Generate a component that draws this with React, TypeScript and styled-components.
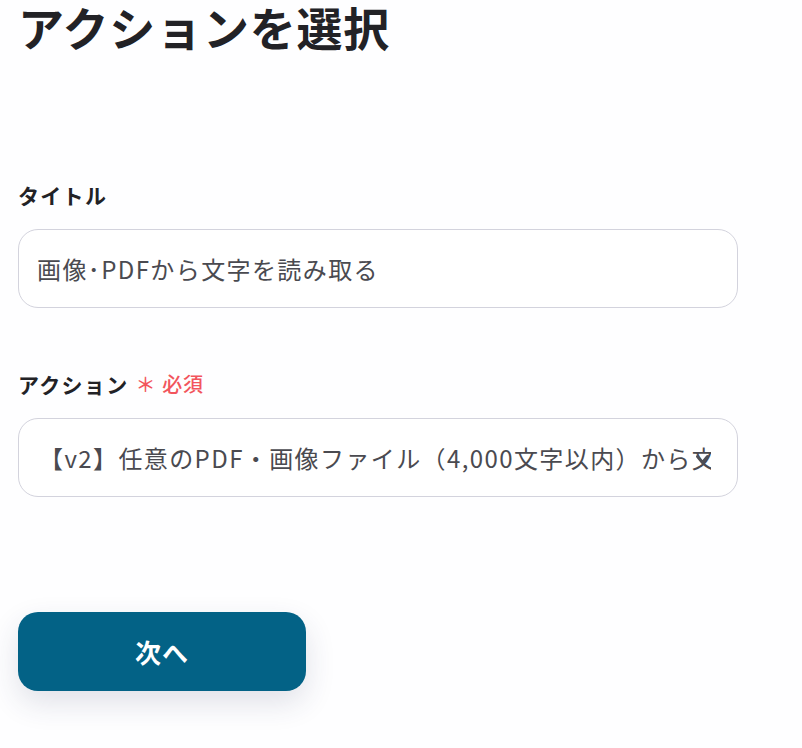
import React from "react";
import styled, { createGlobalStyle } from "styled-components";

const Global = createGlobalStyle`
  html, body { margin: 0; padding: 0; background: #fefeff; }
  body { font-family: "Noto Sans CJK JP", "Noto Sans", sans-serif; color: #222; }
`;

const Page = styled.div`
  width: 802px;
  height: 748px;
  padding: 0 0 0 18px;
  box-sizing: border-box;
  overflow: hidden;
  display: flex;
  flex-direction: column;
`;

const Heading = styled.h1`
  margin: 0;
  font-size: 46px;
  line-height: 52px;
  font-weight: 700;
  letter-spacing: 0.8px;
  color: #222226;
`;

const Field = styled.div<{ $top: number }>`
  display: flex;
  flex-direction: column;
  gap: 20px;
  margin-top: ${(p) => p.$top}px;
  width: 720px;
`;

const Label = styled.div`
  display: flex;
  align-items: center;
  gap: 7px;
  font-size: 21px;
  line-height: 28px;
  font-weight: 700;
  letter-spacing: 1.3px;
  color: #222226;
`;

const Required = styled.span`
  font-size: 20px;
  font-weight: 500;
  letter-spacing: 0.8px;
  color: #f2555d;
  display: flex;
  align-items: center;
  gap: 6px;
`;

const Box = styled.div<{ $pad: number }>`
  position: relative;
  height: 79px;
  box-sizing: border-box;
  border: 1px solid #d3d3dd;
  border-radius: 20px;
  background: #fff;
  display: flex;
  align-items: center;
  padding: 0 26px 0 ${(p) => p.$pad}px;
  font-size: 24px;
  letter-spacing: 1.4px;
  color: #4a4a50;
  overflow: hidden;
`;

const ClipText = styled.span`
  white-space: nowrap;
  overflow: hidden;
  flex: 1;
`;

const Chevron = styled.svg`
  position: absolute;
  z-index: 2;
  right: 27px;
  top: 34px;
  display: block;
`;

const Button = styled.button`
  margin-top: 115px;
  width: 288px;
  height: 79px;
  border: none;
  border-radius: 20px;
  background: #036286;
  color: #fff;
  font-family: inherit;
  font-size: 26px;
  font-weight: 700;
  letter-spacing: 1px;
  box-shadow: 0 12px 30px rgba(40, 50, 90, 0.14);
  cursor: pointer;
`;

export default function App() {
  return (
    <>
      <Global />
      <Page>
        <Heading>アクションを選択</Heading>
        <Field $top={129}>
          <Label>タイトル</Label>
          <Box $pad={18}>
            <ClipText>画像･PDFから文字を読み取る</ClipText>
          </Box>
        </Field>
        <Field $top={62}>
          <Label>
            アクション
            <Required>
              <span>＊</span>必須
            </Required>
          </Label>
          <Box $pad={20}>
            <ClipText>【v2】任意のPDF・画像ファイル（4,000文字以内）から文字情報を読み取る</ClipText>
            <Chevron width="15" height="13" viewBox="0 0 15 13">
              <path d="M2.5 3.5 L7.5 9.5 L12.5 3.5" fill="none" stroke="#4f4f55" strokeWidth="3" strokeLinecap="round" strokeLinejoin="round" />
            </Chevron>
          </Box>
        </Field>
        <Button>次へ</Button>
      </Page>
    </>
  );
}
